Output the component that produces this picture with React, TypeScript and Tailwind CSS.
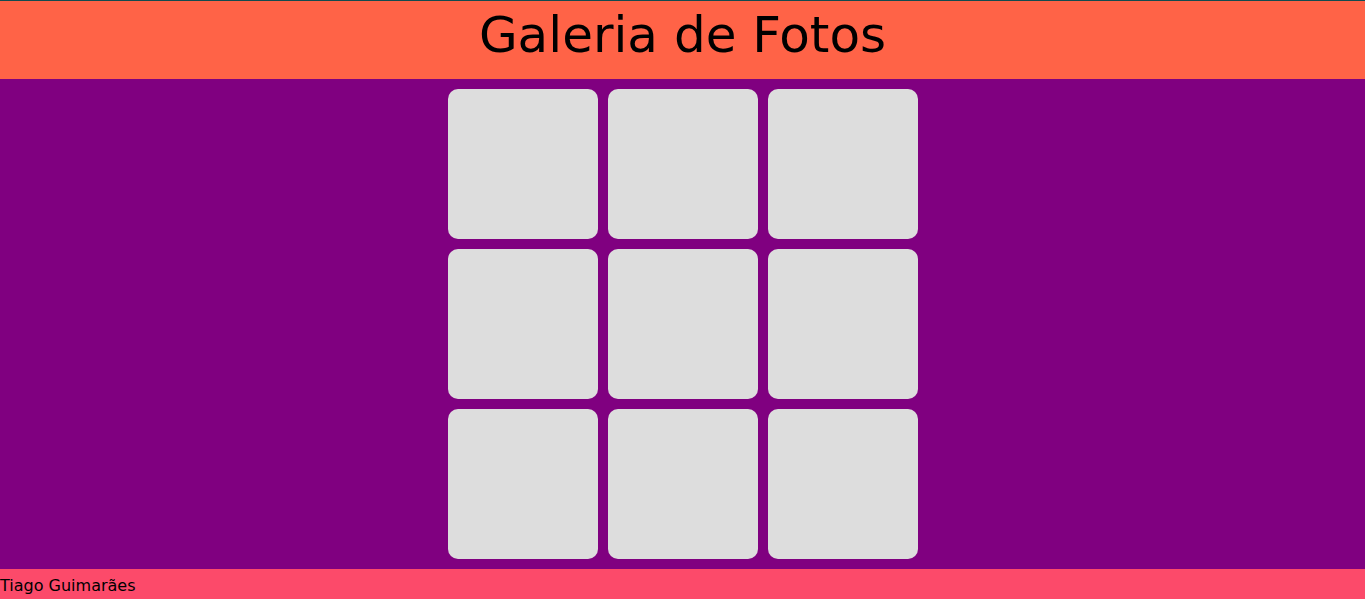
export default function App() {
  const fotos = Array.from({ length: 9 });

  return (
    <div className="min-h-[599px] flex flex-col font-['DejaVu_Sans',Verdana,sans-serif] text-black">
      <header className="border-t border-[#134b4f] bg-[#ff6347] h-[79px] flex items-center justify-center">
        <h1 className="text-[50px] leading-none -mt-[10px]">Galeria de Fotos</h1>
      </header>

      <main className="bg-[#800080] flex justify-center py-[10px]">
        <div className="grid grid-cols-[150px_150px_150px] gap-[10px]">
          {fotos.map((_, i) => (
            <div key={i} className="w-[150px] h-[150px] rounded-[10px] bg-[#dddddd]" />
          ))}
        </div>
      </main>

      <footer className="bg-[#fc4a6a] h-[30px] flex items-center pt-[3px] text-base">
        Tiago Guimarães
      </footer>
    </div>
  );
}
